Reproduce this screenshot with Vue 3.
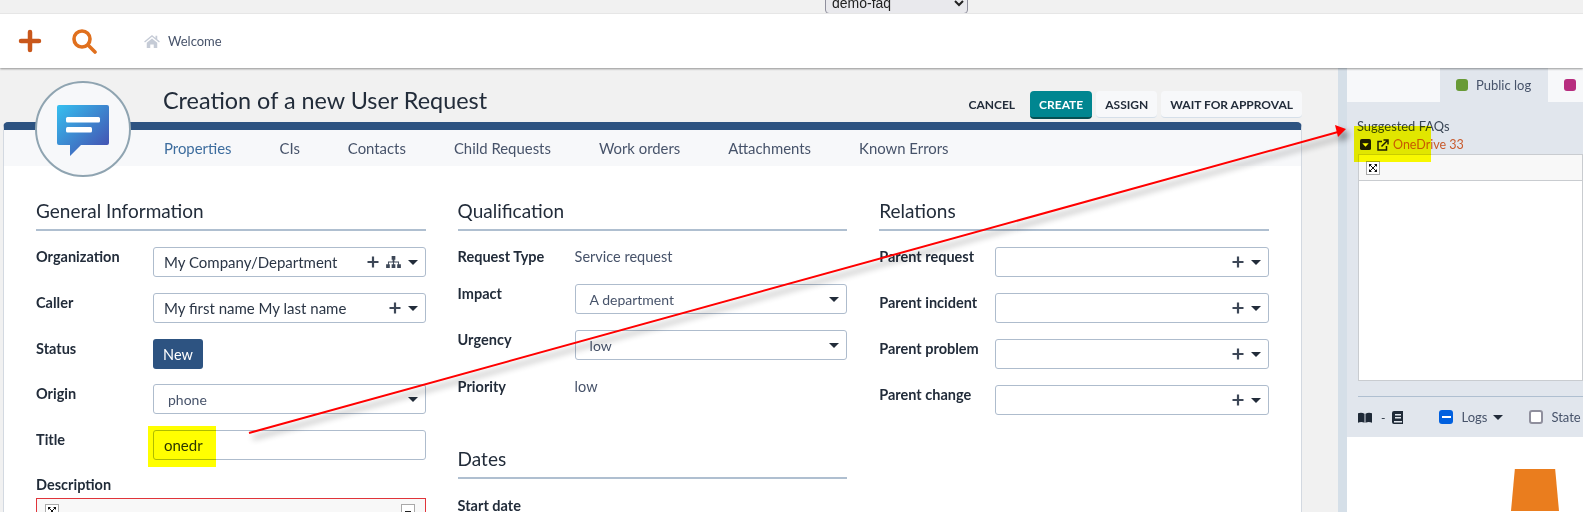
<template>
  <div class="page">
    <div class="top-strip">
      <select class="env-select"><option>demo-faq</option></select>
    </div>

    <header class="navbar">
      <svg class="nav-plus" viewBox="0 0 24 24"><path d="M12 3v18M3 12h18" /></svg>
      <svg class="nav-search" viewBox="0 0 26 26"><circle cx="11" cy="11" r="8" /><path d="M17 17l7 7" /></svg>
      <svg class="nav-home" viewBox="0 0 18 16"><path d="M9 1L0 8.5l1 1.2L9 3l8 6.7 1-1.2-3-2.5V2h-2v2.6z" /><path d="M3 10l6-5 6 5v6h-4v-4H7v4H3z" /></svg>
      <span class="crumb">Welcome</span>
    </header>

    <div class="main">
      <div class="left">
        <div class="title-row">
          <h1>Creation of a new User Request</h1>
          <div class="actions">
            <button class="btn plain">CANCEL</button>
            <button class="btn primary">CREATE</button>
            <button class="btn">ASSIGN</button>
            <button class="btn">WAIT FOR APPROVAL</button>
          </div>
        </div>

        <section class="card">
          <div class="avatar">
            <svg viewBox="0 0 52 52" width="52" height="52">
              <defs>
                <linearGradient id="chat" x1="0" y1="0" x2="1" y2="1">
                  <stop offset="0" stop-color="#35c0f0" />
                  <stop offset="1" stop-color="#4647ab" />
                </linearGradient>
              </defs>
              <path d="M2 0h48a2 2 0 0 1 2 2v36a2 2 0 0 1-2 2H24L13 51V40H2a2 2 0 0 1-2-2V2a2 2 0 0 1 2-2z" fill="url(#chat)" />
              <rect x="9" y="12" width="34" height="5.5" rx="1.5" fill="#fff" />
              <rect x="9" y="22" width="26" height="5.5" rx="1.5" fill="#fff" />
            </svg>
          </div>

          <nav class="tabs">
            <span v-for="(tab, i) in tabs" :key="tab" class="tab" :class="{ active: i === 0 }">{{ tab }}</span>
          </nav>

          <div class="columns">
            <div class="col">
              <h2>General Information</h2>
              <div v-for="row in generalRows" :key="row.label" class="row" :class="{ tight: row.badge }">
                <label>{{ row.label }}</label>
                <span v-if="row.badge" class="badge">{{ row.badge }}</span>
                <div v-else class="field" :class="{ indented: row.indented }">
                  <span class="value">{{ row.value }}</span>
                  <svg v-if="row.plus" class="ico-plus" viewBox="0 0 12 12"><path d="M6 .5v11M.5 6h11" /></svg>
                  <svg v-if="row.tree" class="ico-tree" viewBox="0 0 16 13"><path d="M6 0h4v4H9v2h5v3h2v4h-4V9h1V7H8.500v2H10v4H6V9h1.500V7H3v2h1v4H0V9h2V6h5V4H6z" /></svg>
                  <i v-if="row.caret" class="caret"></i>
                </div>
              </div>
              <label class="desc-label">Description</label>
              <div class="desc-box">
                <svg class="max-ico" viewBox="0 0 14 14">
                  <rect x=".5" y=".5" width="13" height="13" />
                  <path d="M3 3h3L3 6zM11 3v3L8 3zM3 11V8l3 3zM11 11H8l3-3z" />
                  <path d="M4 4l6 6M10 4l-6 6" class="cross" />
                </svg>
                <span class="min-ico"></span>
              </div>
            </div>

            <div class="col">
              <h2>Qualification</h2>
              <div class="row static">
                <label>Request Type</label>
                <span class="static-value">Service request</span>
              </div>
              <div class="row">
                <label>Impact</label>
                <div class="field indented"><span class="value">A department</span><i class="caret"></i></div>
              </div>
              <div class="row">
                <label>Urgency</label>
                <div class="field indented"><span class="value">low</span><i class="caret"></i></div>
              </div>
              <div class="row static priority">
                <label>Priority</label>
                <span class="static-value">low</span>
              </div>
              <h2 class="dates">Dates</h2>
              <div class="row static">
                <label>Start date</label>
              </div>
            </div>

            <div class="col">
              <h2>Relations</h2>
              <div v-for="label in relationRows" :key="label" class="row">
                <label>{{ label }}</label>
                <div class="field">
                  <span class="value"></span>
                  <svg class="ico-plus" viewBox="0 0 12 12"><path d="M6 .5v11M.5 6h11" /></svg>
                  <i class="caret"></i>
                </div>
              </div>
            </div>
          </div>
        </section>
      </div>

      <div class="splitter"></div>

      <aside class="side">
        <div class="side-tabs">
          <div class="side-tab blank"></div>
          <div class="side-tab current"><i class="dot green"></i>Public log</div>
          <div class="side-tab"><i class="dot pink"></i></div>
        </div>

        <div class="side-body">
          <div class="faq-title">Suggested FAQs</div>
          <div class="faq-row">
            <svg class="faq-caret" viewBox="0 0 12 12"><rect width="12" height="12" rx="2" fill="#1d1d1d" /><path d="M2.500 4.500h7L6 8.500z" fill="#ffffc8" /></svg>
            <svg class="faq-link" viewBox="0 0 12 12"><path d="M5 2.500H1v8.500h8.500V7" /><path d="M4.500 7.500L10 2M6.500 1h4.500v4.500" /></svg>
            <span class="faq-name">OneDrive 33</span>
          </div>
          <div class="faq-box">
            <div class="faq-tools">
              <svg class="max-ico" viewBox="0 0 14 14">
                <rect x=".5" y=".5" width="13" height="13" />
                <path d="M3 3h3L3 6zM11 3v3L8 3zM3 11V8l3 3zM11 11H8l3-3z" />
                <path d="M4 4l6 6M10 4l-6 6" class="cross" />
              </svg>
            </div>
          </div>

          <div class="log-bar">
            <svg class="book" viewBox="0 0 15 11"><path d="M0 1c2-1 5-1 7 .5V11c-2-1-5-1-7 0zM8 1.500C10 0 13 0 15 1v10c-2-1-5-1-7 0z" /></svg>
            <span class="dash">-</span>
            <svg class="book closed" viewBox="0 0 11 13"><path d="M2 0h9v13H2a2 2 0 0 1-2-2V2a2 2 0 0 1 2-2zm1 3v1.500h6V3zm0 3v1.500h6V6zM2 10v1.500h8V10z" fill-rule="evenodd" /></svg>
            <i class="check minus"></i>
            <span class="bar-label">Logs</span>
            <i class="caret dark"></i>
            <i class="check empty"></i>
            <span class="bar-label">State</span>
          </div>
        </div>

        <div class="side-canvas">
          <div class="cone"></div>
        </div>
      </aside>
    </div>

    <!-- annotations drawn over the screenshot -->
    <div class="marker marker-title"></div>
    <div class="marker marker-faq"></div>
    <svg class="arrow" width="1583" height="512" viewBox="0 0 1583 512">
      <path d="M249 433L1338 132" />
      <polygon points="1346,129 1335,125 1338,137" />
    </svg>
  </div>
</template>

<script setup>
const tabs = ['Properties', 'CIs', 'Contacts', 'Child Requests', 'Work orders', 'Attachments', 'Known Errors']

const generalRows = [
  { label: 'Organization', value: 'My Company/Department', plus: true, tree: true, caret: true },
  { label: 'Caller', value: 'My first name My last name', plus: true, caret: true },
  { label: 'Status', badge: 'New' },
  { label: 'Origin', value: 'phone', caret: true, indented: true },
  { label: 'Title', value: 'onedr' }
]

const relationRows = ['Parent request', 'Parent incident', 'Parent problem', 'Parent change']
</script>

<style>
html,
body {
  margin: 0;
  overflow: hidden;
}
</style>

<style scoped>
.page {
  position: relative;
  display: flex;
  flex-direction: column;
  width: 1583px;
  height: 512px;
  overflow: hidden;
  background: #f1f1f1;
  color: #1f2a37;
  font-family: Lato, "Noto Sans", sans-serif;
  font-size: 14px;
}

.top-strip {
  height: 14px;
  flex: none;
  padding-left: 825px;
  overflow: hidden;
  background: #f1f1f1;
}

.env-select {
  display: block;
  width: 143px;
  height: 22px;
  margin-top: -8px;
  padding-left: 2px;
  border: 1px solid #8f8f9d;
  border-radius: 4px;
  background-color: #e9e9ed;
  color: #222;
  font-family: "Liberation Sans", sans-serif;
  font-size: 14px;
}

.navbar {
  position: relative;
  z-index: 2;
  display: flex;
  flex: none;
  align-items: center;
  height: 54px;
  box-sizing: border-box;
  background: #fff;
  box-shadow: 0 -1px 0 #e6e6e6, 0 1px 2px rgba(0, 0, 0, 0.4);
}

.nav-plus {
  width: 24px;
  height: 24px;
  margin-left: 18px;
  fill: none;
  stroke: #c9571b;
  stroke-width: 4.5;
  stroke-linecap: round;
}

.nav-search {
  width: 26px;
  height: 26px;
  margin-left: 29px;
  fill: none;
  stroke: #e0701e;
  stroke-width: 3.6;
  stroke-linecap: round;
}

.nav-home {
  width: 16px;
  height: 14px;
  margin-left: 47px;
  fill: #c5cbd6;
}

.crumb {
  margin-left: 8px;
  font-size: 13px;
  color: #47536a;
}

.main {
  display: flex;
  flex: 1;
  min-height: 0;
}

.left {
  width: 1338px;
  flex: none;
  padding-left: 3px;
  box-sizing: border-box;
}

.title-row {
  display: flex;
  align-items: flex-start;
  justify-content: space-between;
  width: 1299px;
  height: 54px;
  padding-left: 160px;
  box-sizing: border-box;
}

h1 {
  margin: 17px 0 0;
  font-size: 23.4px;
  line-height: 30px;
  font-weight: 400;
  color: #222c3a;
}

.actions {
  display: flex;
  gap: 4px;
  margin-top: 23px;
}

.btn {
  height: 27px;
  padding: 0 9px;
  border: 0;
  border-bottom: 1px solid #d5dfe9;
  border-radius: 4px;
  background: #f7f8fa;
  color: #222c3a;
  font-family: inherit;
  font-size: 12px;
  font-weight: 700;
  white-space: nowrap;
}

.btn.plain {
  margin-right: 2px;
  background: transparent;
  border-color: transparent;
}

.btn.primary {
  height: 28px;
  border-bottom: 2px solid #064f52;
  background: #008690;
  color: #fff;
}

.card {
  position: relative;
  width: 1299px;
  height: 500px;
  box-sizing: border-box;
  background: #fff;
  border: 1px solid #d3d9e1;
  border-top: 8px solid #2d5381;
  border-radius: 5px 5px 0 0;
}

.avatar {
  position: absolute;
  top: -49px;
  left: 31px;
  z-index: 1;
  display: flex;
  align-items: center;
  justify-content: center;
  width: 96px;
  height: 96px;
  padding-top: 4px;
  box-sizing: border-box;
  border: 2px solid #8fa4b1;
  border-radius: 50%;
  background: #f7f8fa;
}

.tabs {
  display: flex;
  align-items: center;
  gap: 48px;
  height: 36px;
  padding-left: 160px;
  background: #f7f8fa;
}

.tab {
  font-size: 14.900px;
  color: #47536a;
}

.tab.active {
  color: #3d6d9e;
}

.columns {
  display: flex;
  gap: 32px;
  padding: 34px 0 0 32px;
}

.col {
  width: 389.6px;
}

h2 {
  height: 29px;
  margin: 0 0 16px;
  border-bottom: 2px solid #afbfd0;
  font-size: 19px;
  line-height: 22px;
  font-weight: 400;
  color: #222c3a;
}

h2.dates {
  margin-top: 51px;
  margin-bottom: 17px;
}

.row {
  display: flex;
  align-items: flex-start;
  height: 30px;
  margin-bottom: 16px;
}

.row.tight {
  margin-bottom: 15px;
}

.row label {
  width: 117px;
  flex: none;
  padding-top: 1px;
  font-size: 14.5px;
  line-height: 17px;
  font-weight: 700;
  color: #222c3a;
}

.row.static {
  height: 20px;
  margin-bottom: 17px;
}

.row.priority {
  margin-top: 17px;
  margin-bottom: 0;
}

.static-value {
  font-size: 14.500px;
  line-height: 17px;
  padding-top: 1px;
  color: #47536a;
}

.field {
  display: flex;
  align-items: center;
  flex: 1;
  height: 30px;
  padding: 0 7px 0 10px;
  box-sizing: border-box;
  border: 1px solid #aebccd;
  border-radius: 3px;
  background: #fff;
}

.field.indented {
  padding-left: 14px;
}

.col:nth-child(3) .row label {
  width: 116px;
}

.value {
  flex: 1;
  font-size: 15px;
  color: #2b3646;
  white-space: nowrap;
}

.field.indented .value {
  font-size: 14px;
  color: #47536a;
}

.ico-plus {
  width: 12px;
  height: 12px;
  margin-right: 7px;
  fill: none;
  stroke: #3d4757;
  stroke-width: 2.2;
}

.ico-tree {
  width: 15px;
  height: 12px;
  margin-right: 7px;
  fill: #3d4757;
}

.caret {
  width: 0;
  height: 0;
  border-top: 5px solid #222c3a;
  border-left: 5px solid transparent;
  border-right: 5px solid transparent;
}

.badge {
  display: flex;
  align-items: center;
  justify-content: center;
  width: 50px;
  height: 30px;
  border-radius: 3px;
  background: #2d5381;
  color: #fff;
  font-size: 14.500px;
}

.desc-label {
  display: block;
  margin-top: 5px;
  font-size: 14.500px;
  line-height: 17px;
  font-weight: 700;
}

.desc-box {
  display: flex;
  justify-content: space-between;
  height: 60px;
  margin-top: 5px;
  padding: 5px 10px 0 8px;
  box-sizing: border-box;
  border: 1px solid #e0343a;
  background: #f8f8f8;
}

.max-ico {
  display: block;
  width: 14px;
  height: 14px;
}

.max-ico rect {
  fill: #fff;
  stroke: #a9a9a9;
}

.max-ico path {
  fill: #111;
}

.max-ico .cross {
  fill: none;
  stroke: #111;
  stroke-width: 1;
}

.min-ico {
  display: block;
  width: 14px;
  height: 14px;
  box-sizing: border-box;
  border: 1px solid #a9a9a9;
  background: linear-gradient(#222, #222) center 6px / 6px 2px no-repeat, #fff;
}

.splitter {
  width: 9px;
  flex: none;
  background: #d5dfe8;
}

.side {
  display: flex;
  flex: 1;
  flex-direction: column;
  min-width: 0;
  background: #e1e6ed;
}

.side-tabs {
  display: flex;
  flex: none;
  height: 34px;
}

.side-tab {
  display: flex;
  align-items: center;
  flex: 1;
  box-sizing: border-box;
  padding-left: 16px;
  background: #f7f8fa;
}

.side-tab.blank {
  flex: 0 0 93px;
}

.side-tab.current {
  flex: 0 0 108px;
  background: #e1e6ed;
  font-size: 13px;
  color: #47536a;
  white-space: nowrap;
}

.dot {
  width: 12px;
  height: 12px;
  margin-right: 8px;
  flex: none;
  border-radius: 3px;
}

.dot.green {
  background: #689a36;
}

.dot.pink {
  background: #b72d7f;
}

.side-body {
  flex: none;
  height: 335px;
  padding: 17px 0 0 10px;
  box-sizing: border-box;
}

.faq-title {
  font-size: 12.900px;
  line-height: 15px;
  color: #3a4656;
}

.faq-row {
  display: flex;
  align-items: center;
  height: 19px;
  margin-top: 1px;
  padding-left: 3px;
}

.faq-caret {
  width: 11px;
  height: 11px;
}

.faq-link {
  width: 12px;
  height: 12px;
  margin-left: 6px;
  fill: none;
  stroke: #1d1d1d;
  stroke-width: 1.500;
}

.faq-name {
  margin-left: 4px;
  font-size: 12.500px;
  color: #c85a2c;
}

.faq-box {
  height: 227px;
  margin-left: 1px;
  box-sizing: border-box;
  border: 1px solid #c9ccd0;
  background: #fff;
}

.faq-tools {
  height: 26px;
  padding: 6px 0 0 7px;
  box-sizing: border-box;
  border-bottom: 1px solid #c9ccd0;
  background: #f8f8f8;
}

.log-bar {
  display: flex;
  align-items: center;
  height: 41px;
  margin-top: 15px;
  margin-left: 1px;
  box-sizing: border-box;
  border-top: 1px solid #afbfd0;
}

.book {
  width: 14px;
  height: 11px;
  fill: #1f2a37;
}

.book.closed {
  width: 11px;
  height: 13px;
}

.dash {
  margin: 0 7px 0 9px;
  font-size: 12px;
}

.check {
  width: 14px;
  height: 14px;
  flex: none;
  box-sizing: border-box;
  border-radius: 3px;
}

.check.minus {
  margin-left: 36px;
  background: linear-gradient(#fff, #fff) center / 9px 2px no-repeat, #0060df;
}

.check.empty {
  margin-left: 26px;
  border: 2px solid #8f8f9d;
  background: #fff;
}

.bar-label {
  margin-left: 8px;
  font-size: 13px;
  color: #47536a;
}

.caret.dark {
  margin-left: 6px;
}

.side-canvas {
  flex: 1;
  position: relative;
  background: #fff;
}

.cone {
  position: absolute;
  top: 32px;
  left: 164px;
  width: 48px;
  height: 42px;
  background: #ea7d1e;
  clip-path: polygon(8% 0, 92% 0, 100% 100%, 0 100%);
  border-radius: 4px 4px 0 0;
}

.marker {
  position: absolute;
  background: #ffff00;
  mix-blend-mode: multiply;
}

.marker-title {
  top: 426px;
  left: 148px;
  width: 68px;
  height: 41px;
}

.marker-faq {
  top: 126px;
  left: 1354px;
  width: 77px;
  height: 36px;
}

.arrow {
  position: absolute;
  top: 0;
  left: 0;
  filter: drop-shadow(4px 5px 3px rgba(0, 0, 0, 0.45));
}

.arrow path {
  fill: none;
  stroke: #f00;
  stroke-width: 2;
}

.arrow polygon {
  fill: #f00;
}
</style>
